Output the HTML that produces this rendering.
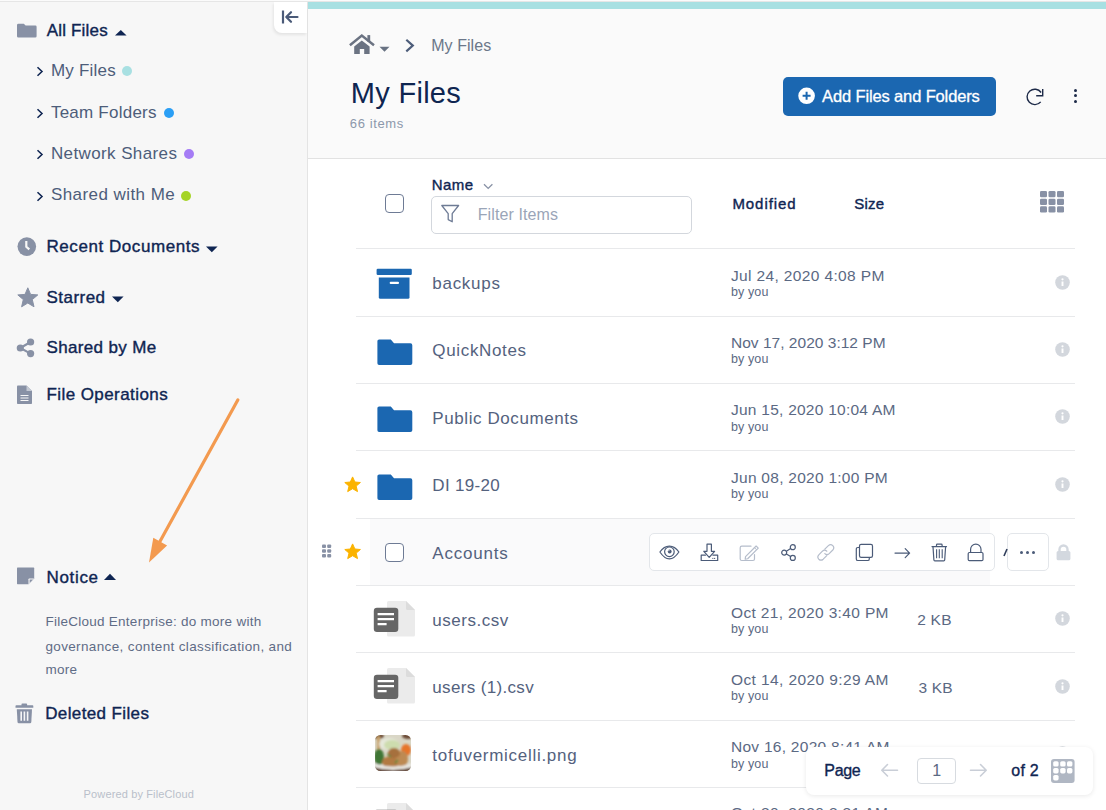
<!DOCTYPE html>
<html><head><meta charset="utf-8"><style>
html,body{margin:0;padding:0;width:1106px;height:810px;overflow:hidden;background:#fff;font-family:"Liberation Sans",sans-serif}
.a{position:absolute;display:block}
.t{position:absolute;white-space:nowrap}
</style></head><body>
<div class="a" style="left:0px;top:0px;width:307px;height:810px;background:#f7f7f7"></div>
<div class="a" style="left:307px;top:0px;width:1px;height:810px;background:#e4e4e4"></div>
<div class="a" style="left:0px;top:0px;width:1106px;height:1px;background:#fbfbfb"></div>
<div class="a" style="left:0px;top:1px;width:1106px;height:1px;background:#e6e6e6"></div>
<div class="a" style="left:274px;top:2px;width:33px;height:31px;background:#fff;border-bottom-left-radius:8px;box-shadow:-1px 2px 3px rgba(0,0,0,0.08)"></div>
<svg class="a" style="left:280.4px;top:9px;" width="20" height="16" viewBox="0 0 20 16"><path d="M3 1.5v13" stroke="#4a5a78" stroke-width="2.2" fill="none"/><path d="M17.5 8H6.5M11 3.2 6.3 8l4.7 4.8" stroke="#4a5a78" stroke-width="2.2" fill="none" stroke-linecap="round" stroke-linejoin="round"/></svg>
<svg class="a" style="left:17px;top:23px;" width="20" height="15" viewBox="0 0 20 15"><path d="M0 2.2Q0 0.8 1.4 0.8H6.8L8.6 2.6H18.4Q19.6 2.6 19.6 3.8V13.2Q19.6 14.6 18.2 14.6H1.4Q0 14.6 0 13.2Z" fill="#8891a5"/></svg>
<div class="t" style="left:46.81px;top:21.81px;font-size:17px;line-height:17px;color:#0f2552;letter-spacing:0.165px;-webkit-text-stroke:0.38px #0f2552;">All Files</div>
<svg class="a" style="left:115px;top:30px;" width="12" height="6" viewBox="0 0 12 6"><path d="M0 5.5 5.8 0 11.6 5.5Z" fill="#0f2552"/></svg>
<svg class="a" style="left:36px;top:66.2px;" width="8" height="11" viewBox="0 0 8 11"><path d="M1.5 1.2 6 5.5 1.5 9.8" stroke="#0f2552" stroke-width="1.55" fill="none"/></svg>
<div class="t" style="left:50.90px;top:61.81px;font-size:17px;line-height:17px;color:#4d5d7a;letter-spacing:0.229px;">My Files</div>
<div class="a" style="left:122px;top:66.2px;width:10px;height:10px;background:#a8e0e2;border-radius:50%"></div>
<svg class="a" style="left:36px;top:108px;" width="8" height="11" viewBox="0 0 8 11"><path d="M1.5 1.2 6 5.5 1.5 9.8" stroke="#0f2552" stroke-width="1.55" fill="none"/></svg>
<div class="t" style="left:50.90px;top:103.61px;font-size:17px;line-height:17px;color:#4d5d7a;letter-spacing:0.236px;">Team Folders</div>
<div class="a" style="left:164px;top:108px;width:10px;height:10px;background:#2b9ff5;border-radius:50%"></div>
<svg class="a" style="left:36px;top:149.3px;" width="8" height="11" viewBox="0 0 8 11"><path d="M1.5 1.2 6 5.5 1.5 9.8" stroke="#0f2552" stroke-width="1.55" fill="none"/></svg>
<div class="t" style="left:50.90px;top:144.91px;font-size:17px;line-height:17px;color:#4d5d7a;letter-spacing:0.396px;">Network Shares</div>
<div class="a" style="left:184px;top:149.3px;width:10px;height:10px;background:#a57cf5;border-radius:50%"></div>
<svg class="a" style="left:36px;top:190.8px;" width="8" height="11" viewBox="0 0 8 11"><path d="M1.5 1.2 6 5.5 1.5 9.8" stroke="#0f2552" stroke-width="1.55" fill="none"/></svg>
<div class="t" style="left:50.90px;top:186.41px;font-size:17px;line-height:17px;color:#4d5d7a;letter-spacing:0.438px;">Shared with Me</div>
<div class="a" style="left:181px;top:190.8px;width:10px;height:10px;background:#a5d426;border-radius:50%"></div>
<svg class="a" style="left:17px;top:237px;" width="20" height="20" viewBox="0 0 20 20"><circle cx="9.8" cy="9.6" r="9.3" fill="#8891a5"/><path d="M9.3 4v5.8l3 2.6" stroke="#f7f7f7" stroke-width="2.2" fill="none"/></svg>
<div class="t" style="left:46.51px;top:237.81px;font-size:17px;line-height:17px;color:#0f2552;letter-spacing:0.558px;-webkit-text-stroke:0.38px #0f2552;">Recent Documents</div>
<svg class="a" style="left:206px;top:246px;" width="12" height="7" viewBox="0 0 12 7"><path d="M0 0.5H11.6L5.8 6.3Z" fill="#0f2552"/></svg>
<svg class="a" style="left:17px;top:287px;" width="22" height="21" viewBox="0 0 22 21"><path d="M10.8 0.8 13.6 7.4 20.8 7.9 15.3 12.6 17 19.8 10.8 16 4.6 19.8 6.3 12.6 0.8 7.9 8 7.4Z" fill="#8891a5" stroke="#8891a5" stroke-width="1" stroke-linejoin="round"/></svg>
<div class="t" style="left:46.51px;top:288.51px;font-size:17px;line-height:17px;color:#0f2552;letter-spacing:0.462px;-webkit-text-stroke:0.38px #0f2552;">Starred</div>
<svg class="a" style="left:112px;top:296px;" width="12" height="7" viewBox="0 0 12 7"><path d="M0 0.5H11.6L5.8 6.3Z" fill="#0f2552"/></svg>
<svg class="a" style="left:16px;top:338px;" width="20" height="20" viewBox="0 0 20 20"><circle cx="14.6" cy="4" r="3.6" fill="#8891a5"/><circle cx="4.3" cy="10" r="3.6" fill="#8891a5"/><circle cx="14.6" cy="15.6" r="3.6" fill="#8891a5"/><path d="M14.6 4 4.3 10 14.6 15.6" stroke="#8891a5" stroke-width="2.2" fill="none"/></svg>
<div class="t" style="left:46.51px;top:338.51px;font-size:17px;line-height:17px;color:#0f2552;letter-spacing:0.343px;-webkit-text-stroke:0.38px #0f2552;">Shared by Me</div>
<svg class="a" style="left:17px;top:385px;" width="16" height="20" viewBox="0 0 16 20"><path d="M0 1.2Q0 0.5 .8 .5H9.5L15 6V18.2Q15 19 14.2 19H.8Q0 19 0 18.2Z" fill="#8891a5"/><path d="M9.5 .5V6H15" fill="#c4c9d3"/><path d="M3.5 10.5h8M3.5 13h8M3.5 15.5h8" stroke="#f7f7f7" stroke-width="1"/></svg>
<div class="t" style="left:46.51px;top:385.71px;font-size:17px;line-height:17px;color:#0f2552;letter-spacing:0.419px;-webkit-text-stroke:0.38px #0f2552;">File Operations</div>
<svg class="a" style="left:140px;top:395px;" width="110" height="175" viewBox="0 0 110 175"><path d="M97.8 5 18 150" stroke="#f39a4f" stroke-width="3.2" stroke-linecap="round"/><path d="M9 167.5 13.3 142.8 27.1 150.6Z" fill="#f39a4f"/></svg>
<svg class="a" style="left:17px;top:567px;" width="18" height="18" viewBox="0 0 18 18"><path d="M0 1.2Q0 .6 .6 .6H16.6Q17.2 .6 17.2 1.2V11.5L11.5 17.2H.6Q0 17.2 0 16.6Z" fill="#8891a5"/><path d="M17.2 11.5H12.2Q11.5 11.5 11.5 12.2V17.2Z" fill="#f7f7f7"/><path d="M16 12.6 12.6 16V12.6Z" fill="#8891a5"/></svg>
<div class="t" style="left:46.51px;top:568.61px;font-size:17px;line-height:17px;color:#0f2552;letter-spacing:0.664px;-webkit-text-stroke:0.38px #0f2552;">Notice</div>
<svg class="a" style="left:104px;top:573px;" width="13" height="8" viewBox="0 0 13 8"><path d="M0 7H12L6 0.8Z" fill="#0f2552"/></svg>
<div class="t" style="left:45.40px;top:615.47px;font-size:13.5px;line-height:13.5px;color:#5f6c86;letter-spacing:0.264px;">FileCloud Enterprise: do more with</div>
<div class="t" style="left:45.40px;top:639.77px;font-size:13.5px;line-height:13.5px;color:#5f6c86;letter-spacing:0.364px;">governance, content classification, and</div>
<div class="t" style="left:45.40px;top:663.37px;font-size:13.5px;line-height:13.5px;color:#5f6c86;letter-spacing:0.250px;">more</div>
<svg class="a" style="left:15px;top:703px;" width="19" height="21" viewBox="0 0 19 21"><path d="M6.5 1.2Q6.5 .5 7.3 .5H11.3Q12.1 .5 12.1 1.2V2.2H17.6Q18.3 2.2 18.3 3V4.8H.5V3Q.5 2.2 1.3 2.2H6.5Z" fill="#8891a5"/><path d="M1.8 6.2H17L16.3 19Q16.2 20.2 15 20.2H3.8Q2.6 20.2 2.5 19Z" fill="#8891a5"/><path d="M6.2 8.5V17.8M9.4 8.5V17.8M12.6 8.5V17.8" stroke="#f7f7f7" stroke-width="1.6"/></svg>
<div class="t" style="left:45.21px;top:704.71px;font-size:17px;line-height:17px;color:#0f2552;letter-spacing:0.377px;-webkit-text-stroke:0.38px #0f2552;">Deleted Files</div>
<div class="t" style="left:83.60px;top:788.59px;font-size:11px;line-height:11px;color:#b9bfca;letter-spacing:0.137px;">Powered by FileCloud</div>
<div class="a" style="left:308px;top:2px;width:798px;height:156px;background:#fafafa"></div>
<div class="a" style="left:308px;top:2px;width:798px;height:7px;background:#a8e0e2"></div>
<div class="a" style="left:308px;top:158px;width:798px;height:1px;background:#e2e2e2"></div>
<div class="a" style="left:308px;top:159px;width:798px;height:651px;background:#fff"></div>
<svg class="a" style="left:348px;top:33px;" width="28" height="22" viewBox="0 0 28 22"><path d="M1.9 12.3 13.8 2.6 26 12.3" stroke="#6b7382" stroke-width="2.5" fill="none"/><rect x="19.4" y="2.1" width="2.8" height="6.5" fill="#6b7382"/><path d="M13.8 7.4 6.2 13.4V20.9H11.8V16H16.2V20.9H21.6V13.4Z" fill="#6b7382"/></svg>
<svg class="a" style="left:379px;top:46px;" width="12" height="7" viewBox="0 0 12 7"><path d="M0.5 0.8H10.5L5.5 5.8Z" fill="#687282"/></svg>
<svg class="a" style="left:404px;top:38px;" width="12" height="16" viewBox="0 0 12 16"><path d="M2.3 1.8 8.8 7.6 2.3 13.4" stroke="#4d5d7a" stroke-width="2.2" fill="none"/></svg>
<div class="t" style="left:431.20px;top:38.45px;font-size:16px;line-height:16px;color:#6b7789;letter-spacing:0.064px;">My Files</div>
<div class="t" style="left:350.80px;top:78.55px;font-size:29px;line-height:29px;color:#0e2550;letter-spacing:0.293px;">My Files</div>
<div class="t" style="left:349.80px;top:116.69px;font-size:13px;line-height:13px;color:#8c98ab;letter-spacing:0.607px;">66 items</div>
<div class="a" style="left:783px;top:77px;width:213px;height:39px;background:#1b67b1;border-radius:5px"></div>
<svg class="a" style="left:798px;top:87px;" width="18" height="18" viewBox="0 0 18 18"><circle cx="8.6" cy="8.8" r="8.3" fill="#fff"/><path d="M8.6 4.8V12.8M4.6 8.8H12.6" stroke="#1b67b1" stroke-width="2"/></svg>
<div class="t" style="left:822.05px;top:88.33px;font-size:16.5px;line-height:16.5px;color:#fff;letter-spacing:-0.135px;-webkit-text-stroke:0.3px #fff;">Add Files and Folders</div>
<svg class="a" style="left:1025px;top:87px;" width="20" height="20" viewBox="0 0 20 20"><path d="M16.1 5.5A7.7 7.7 0 1 0 15.7 14.85" stroke="#1d2a48" stroke-width="1.4" fill="none"/><path d="M11.2 8.7H17.7V2" stroke="#1d2a48" stroke-width="1.4" fill="none"/></svg>
<div class="a" style="left:1073.7px;top:88.65px;width:3.1px;height:3.1px;background:#1d2a48;border-radius:50%"></div>
<div class="a" style="left:1073.7px;top:94.35000000000001px;width:3.1px;height:3.1px;background:#1d2a48;border-radius:50%"></div>
<div class="a" style="left:1073.7px;top:100.05px;width:3.1px;height:3.1px;background:#1d2a48;border-radius:50%"></div>
<div class="a" style="left:385px;top:194px;width:19px;height:19px;box-sizing:border-box;border:1.4px solid #6e7b95;border-radius:4px;background:#fff"></div>
<div class="t" style="left:431.71px;top:176.90px;font-size:15px;line-height:15px;color:#0f2552;letter-spacing:0.473px;-webkit-text-stroke:0.38px #0f2552;">Name</div>
<svg class="a" style="left:483px;top:183px;" width="11" height="7" viewBox="0 0 11 7"><path d="M1 1.2 5.2 5.4 9.4 1.2" stroke="#8891a5" stroke-width="1.3" fill="none"/></svg>
<div class="a" style="left:431px;top:196px;width:261px;height:38px;box-sizing:border-box;border:1px solid #d3d7dd;border-radius:5px;background:#fff"></div>
<svg class="a" style="left:440px;top:204px;" width="21" height="20" viewBox="0 0 21 20"><path d="M1.8 1.5H18.6L12.2 9.6V17.8L8.2 15.6V9.6Z" stroke="#6e7b95" stroke-width="1.3" fill="none" stroke-linejoin="round"/></svg>
<div class="t" style="left:477.70px;top:206.85px;font-size:16px;line-height:16px;color:#9aa5b8;letter-spacing:0.109px;">Filter Items</div>
<div class="t" style="left:732.41px;top:196.20px;font-size:15px;line-height:15px;color:#0f2552;letter-spacing:0.931px;-webkit-text-stroke:0.38px #0f2552;">Modified</div>
<div class="t" style="left:854.31px;top:196.20px;font-size:15px;line-height:15px;color:#0f2552;letter-spacing:0.173px;-webkit-text-stroke:0.38px #0f2552;">Size</div>
<svg class="a" style="left:1039.5px;top:191px;" width="24.5" height="22" viewBox="0 0 24.5 22"><rect x="0" y="0" width="7" height="6.3" rx="1.3" fill="#8891a5"/><rect x="0" y="7.8" width="7" height="6.3" rx="1.3" fill="#8891a5"/><rect x="0" y="15.2" width="7" height="6.3" rx="1.3" fill="#8891a5"/><rect x="8.5" y="0" width="7" height="6.3" rx="1.3" fill="#8891a5"/><rect x="8.5" y="7.8" width="7" height="6.3" rx="1.3" fill="#8891a5"/><rect x="8.5" y="15.2" width="7" height="6.3" rx="1.3" fill="#8891a5"/><rect x="17" y="0" width="7" height="6.3" rx="1.3" fill="#8891a5"/><rect x="17" y="7.8" width="7" height="6.3" rx="1.3" fill="#8891a5"/><rect x="17" y="15.2" width="7" height="6.3" rx="1.3" fill="#8891a5"/></svg>
<div class="a" style="left:356px;top:248px;width:719px;height:1px;background:#e8e9eb"></div>
<div class="a" style="left:356px;top:316px;width:719px;height:1px;background:#e8e9eb"></div>
<div class="a" style="left:356px;top:383px;width:719px;height:1px;background:#e8e9eb"></div>
<div class="a" style="left:356px;top:450px;width:719px;height:1px;background:#e8e9eb"></div>
<div class="a" style="left:356px;top:518px;width:719px;height:1px;background:#e8e9eb"></div>
<div class="a" style="left:356px;top:585px;width:719px;height:1px;background:#e8e9eb"></div>
<div class="a" style="left:356px;top:652px;width:719px;height:1px;background:#e8e9eb"></div>
<div class="a" style="left:356px;top:720px;width:719px;height:1px;background:#e8e9eb"></div>
<div class="a" style="left:356px;top:787px;width:719px;height:1px;background:#e8e9eb"></div>
<div class="a" style="left:370px;top:519px;width:620px;height:66px;background:#fafafb"></div>
<svg class="a" style="left:376px;top:268px;" width="37" height="32" viewBox="0 0 37 32"><rect x="0.6" y="0.7" width="35.2" height="6.3" rx="1.2" fill="#1b67b1"/><path d="M2.8 9.4H33.5V29.2Q33.5 30.7 32 30.7H4.3Q2.8 30.7 2.8 29.2Z" fill="#1b67b1"/><rect x="13.7" y="13.8" width="9.3" height="2.2" rx="1" fill="#fff"/></svg>
<div class="t" style="left:432.30px;top:275.11px;font-size:17px;line-height:17px;color:#54627e;letter-spacing:0.717px;">backups</div>
<div class="t" style="left:731.00px;top:267.78px;font-size:15.5px;line-height:15.5px;color:#5b6983;letter-spacing:0.358px;">Jul 24, 2020 4:08 PM</div>
<div class="t" style="left:731.00px;top:286.12px;font-size:12.5px;line-height:12.5px;color:#5b6983;letter-spacing:0.110px;">by you</div>
<svg class="a" style="left:1054.5px;top:274.5px;" width="15" height="15" viewBox="0 0 15 15"><circle cx="7.5" cy="7.5" r="7.3" fill="#d3d7dd"/><circle cx="7.5" cy="4.3" r="1.1" fill="#fff"/><path d="M7.5 6.5V11" stroke="#fff" stroke-width="1.9"/></svg>
<svg class="a" style="left:376.5px;top:338.95px;" width="36" height="27" viewBox="0 0 36 27"><path d="M0.4 2.1Q0.4 0.4 2.1 0.4H13.8L17 4.3H33.4Q35.3 4.3 35.3 6.2V24.3Q35.3 26.1 33.4 26.1H2.1Q0.4 26.1 0.4 24.3Z" fill="#1b67b1"/></svg>
<div class="t" style="left:432.30px;top:342.46px;font-size:17px;line-height:17px;color:#54627e;letter-spacing:0.661px;">QuickNotes</div>
<div class="t" style="left:731.00px;top:335.13px;font-size:15.5px;line-height:15.5px;color:#5b6983;letter-spacing:0.018px;">Nov 17, 2020 3:12 PM</div>
<div class="t" style="left:731.00px;top:353.47px;font-size:12.5px;line-height:12.5px;color:#5b6983;letter-spacing:0.110px;">by you</div>
<svg class="a" style="left:1054.5px;top:341.84999999999997px;" width="15" height="15" viewBox="0 0 15 15"><circle cx="7.5" cy="7.5" r="7.3" fill="#d3d7dd"/><circle cx="7.5" cy="4.3" r="1.1" fill="#fff"/><path d="M7.5 6.5V11" stroke="#fff" stroke-width="1.9"/></svg>
<svg class="a" style="left:376.5px;top:406.3px;" width="36" height="27" viewBox="0 0 36 27"><path d="M0.4 2.1Q0.4 0.4 2.1 0.4H13.8L17 4.3H33.4Q35.3 4.3 35.3 6.2V24.3Q35.3 26.1 33.4 26.1H2.1Q0.4 26.1 0.4 24.3Z" fill="#1b67b1"/></svg>
<div class="t" style="left:432.30px;top:409.81px;font-size:17px;line-height:17px;color:#54627e;letter-spacing:0.587px;">Public Documents</div>
<div class="t" style="left:731.00px;top:402.48px;font-size:15.5px;line-height:15.5px;color:#5b6983;letter-spacing:0.248px;">Jun 15, 2020 10:04 AM</div>
<div class="t" style="left:731.00px;top:420.82px;font-size:12.5px;line-height:12.5px;color:#5b6983;letter-spacing:0.110px;">by you</div>
<svg class="a" style="left:1054.5px;top:409.2px;" width="15" height="15" viewBox="0 0 15 15"><circle cx="7.5" cy="7.5" r="7.3" fill="#d3d7dd"/><circle cx="7.5" cy="4.3" r="1.1" fill="#fff"/><path d="M7.5 6.5V11" stroke="#fff" stroke-width="1.9"/></svg>
<svg class="a" style="left:376.5px;top:473.65000000000003px;" width="36" height="27" viewBox="0 0 36 27"><path d="M0.4 2.1Q0.4 0.4 2.1 0.4H13.8L17 4.3H33.4Q35.3 4.3 35.3 6.2V24.3Q35.3 26.1 33.4 26.1H2.1Q0.4 26.1 0.4 24.3Z" fill="#1b67b1"/></svg>
<svg class="a" style="left:343.5px;top:476.05px;" width="18" height="17" viewBox="0 0 18 17"><path d="M8.6 .9 10.9 6 16.4 6.5 12.2 10.1 13.5 15.6 8.6 12.7 3.7 15.6 5 10.1 .8 6.5 6.3 6Z" fill="#fbb300" stroke="#fbb300" stroke-width="1" stroke-linejoin="round"/></svg>
<div class="t" style="left:432.30px;top:477.16px;font-size:17px;line-height:17px;color:#54627e;letter-spacing:0.329px;">DI 19-20</div>
<div class="t" style="left:731.00px;top:469.83px;font-size:15.5px;line-height:15.5px;color:#5b6983;letter-spacing:0.266px;">Jun 08, 2020 1:00 PM</div>
<div class="t" style="left:731.00px;top:488.17px;font-size:12.5px;line-height:12.5px;color:#5b6983;letter-spacing:0.110px;">by you</div>
<svg class="a" style="left:1054.5px;top:476.55px;" width="15" height="15" viewBox="0 0 15 15"><circle cx="7.5" cy="7.5" r="7.3" fill="#d3d7dd"/><circle cx="7.5" cy="4.3" r="1.1" fill="#fff"/><path d="M7.5 6.5V11" stroke="#fff" stroke-width="1.9"/></svg>
<svg class="a" style="left:321px;top:544.4000000000001px;" width="12" height="14" viewBox="0 0 12 14"><rect x="1" y="0.5" width="4" height="3.6" rx="1" fill="#8891a5"/><rect x="1" y="5.2" width="4" height="3.6" rx="1" fill="#8891a5"/><rect x="1" y="9.9" width="4" height="3.6" rx="1" fill="#8891a5"/><rect x="6.2" y="0.5" width="4" height="3.6" rx="1" fill="#8891a5"/><rect x="6.2" y="5.2" width="4" height="3.6" rx="1" fill="#8891a5"/><rect x="6.2" y="9.9" width="4" height="3.6" rx="1" fill="#8891a5"/></svg>
<div class="a" style="left:385px;top:543px;width:19px;height:19px;box-sizing:border-box;border:1.4px solid #6e7b95;border-radius:4px;background:#fff"></div>
<svg class="a" style="left:343.5px;top:543.4000000000001px;" width="18" height="17" viewBox="0 0 18 17"><path d="M8.6 .9 10.9 6 16.4 6.5 12.2 10.1 13.5 15.6 8.6 12.7 3.7 15.6 5 10.1 .8 6.5 6.3 6Z" fill="#fbb300" stroke="#fbb300" stroke-width="1" stroke-linejoin="round"/></svg>
<div class="t" style="left:432.30px;top:544.51px;font-size:17px;line-height:17px;color:#54627e;letter-spacing:0.779px;">Accounts</div>
<svg class="a" style="left:373px;top:600.95px;" width="43" height="37" viewBox="0 0 43 37"><path d="M14 1.5Q14 0 15.5 0H33L42 9V34Q42 35.5 40.5 35.5H15.5Q14 35.5 14 34Z" fill="#ebebeb"/><path d="M33 0V7.5Q33 9 34.5 9H42Z" fill="#dcdcdc"/><rect x="0.8" y="6.8" width="24.5" height="24.2" rx="3.2" fill="#666"/><path d="M4.6 13.2H21M4.6 18.2H21M4.6 23.2H13.6" stroke="#fff" stroke-width="2.3"/></svg>
<div class="t" style="left:432.30px;top:611.86px;font-size:17px;line-height:17px;color:#54627e;letter-spacing:0.525px;">users.csv</div>
<div class="t" style="left:731.00px;top:604.53px;font-size:15.5px;line-height:15.5px;color:#5b6983;letter-spacing:0.353px;">Oct 21, 2020 3:40 PM</div>
<div class="t" style="left:731.00px;top:622.87px;font-size:12.5px;line-height:12.5px;color:#5b6983;letter-spacing:0.110px;">by you</div>
<div class="t" style="left:917.30px;top:612.43px;font-size:15.5px;line-height:15.5px;color:#5b6983;letter-spacing:0.200px;">2 KB</div>
<svg class="a" style="left:1054.5px;top:611.25px;" width="15" height="15" viewBox="0 0 15 15"><circle cx="7.5" cy="7.5" r="7.3" fill="#d3d7dd"/><circle cx="7.5" cy="4.3" r="1.1" fill="#fff"/><path d="M7.5 6.5V11" stroke="#fff" stroke-width="1.9"/></svg>
<svg class="a" style="left:373px;top:668.3000000000001px;" width="43" height="37" viewBox="0 0 43 37"><path d="M14 1.5Q14 0 15.5 0H33L42 9V34Q42 35.5 40.5 35.5H15.5Q14 35.5 14 34Z" fill="#ebebeb"/><path d="M33 0V7.5Q33 9 34.5 9H42Z" fill="#dcdcdc"/><rect x="0.8" y="6.8" width="24.5" height="24.2" rx="3.2" fill="#666"/><path d="M4.6 13.2H21M4.6 18.2H21M4.6 23.2H13.6" stroke="#fff" stroke-width="2.3"/></svg>
<div class="t" style="left:432.30px;top:679.21px;font-size:17px;line-height:17px;color:#54627e;letter-spacing:0.342px;">users (1).csv</div>
<div class="t" style="left:731.00px;top:671.88px;font-size:15.5px;line-height:15.5px;color:#5b6983;letter-spacing:0.397px;">Oct 14, 2020 9:29 AM</div>
<div class="t" style="left:731.00px;top:690.22px;font-size:12.5px;line-height:12.5px;color:#5b6983;letter-spacing:0.110px;">by you</div>
<div class="t" style="left:918.40px;top:679.78px;font-size:15.5px;line-height:15.5px;color:#5b6983;letter-spacing:0.200px;">3 KB</div>
<svg class="a" style="left:1054.5px;top:678.6px;" width="15" height="15" viewBox="0 0 15 15"><circle cx="7.5" cy="7.5" r="7.3" fill="#d3d7dd"/><circle cx="7.5" cy="4.3" r="1.1" fill="#fff"/><path d="M7.5 6.5V11" stroke="#fff" stroke-width="1.9"/></svg>
<svg class="a" style="left:375px;top:735.15px;" width="36" height="36" viewBox="0 0 36 36"><defs><clipPath id="ic"><rect x="0" y="0" width="36" height="36" rx="5.5"/></clipPath><filter id="bl" x="-10%" y="-10%" width="120%" height="120%"><feGaussianBlur stdDeviation="0.9"/></filter></defs><g clip-path="url(#ic)"><rect width="36" height="36" fill="#d9d6c6"/><g filter="url(#bl)"><ellipse cx="3" cy="1" rx="6" ry="3" fill="#6b4a36"/><ellipse cx="33" cy="1" rx="6" ry="3" fill="#6b4a36"/><rect x="2" y="1" width="3" height="14" fill="#c9a26a"/><ellipse cx="14" cy="9" rx="10" ry="6" fill="#e6e8da"/><ellipse cx="17" cy="10" rx="8" ry="5" fill="#cddcae"/><ellipse cx="4" cy="22" rx="5" ry="8" fill="#3f7634"/><ellipse cx="31" cy="15" rx="5" ry="6" fill="#e6742c"/><ellipse cx="16" cy="27" rx="9" ry="6" fill="#b27a42"/><ellipse cx="27" cy="24" rx="6" ry="8" fill="#bd8a52"/><ellipse cx="19" cy="18" rx="6" ry="5" fill="#a66f3c"/><path d="M12 19 16 22M20 28 23 25" stroke="#4b8a3a" stroke-width="1.5"/><path d="M-2 28Q18 35 38 28V38H-2Z" fill="#e9e7e2"/><path d="M-2 32Q18 38 38 32V40H-2Z" fill="#5e4030"/></g></g></svg>
<div class="t" style="left:432.30px;top:746.56px;font-size:17px;line-height:17px;color:#54627e;letter-spacing:0.706px;">tofuvermicelli.png</div>
<div class="t" style="left:731.00px;top:739.23px;font-size:15.5px;line-height:15.5px;color:#5b6983;letter-spacing:0.268px;">Nov 16, 2020 8:41 AM</div>
<div class="t" style="left:731.00px;top:757.57px;font-size:12.5px;line-height:12.5px;color:#5b6983;letter-spacing:0.110px;">by you</div>
<svg class="a" style="left:1054.5px;top:745.95px;" width="15" height="15" viewBox="0 0 15 15"><circle cx="7.5" cy="7.5" r="7.3" fill="#d3d7dd"/><circle cx="7.5" cy="4.3" r="1.1" fill="#fff"/><path d="M7.5 6.5V11" stroke="#fff" stroke-width="1.9"/></svg>
<svg class="a" style="left:373px;top:803.0px;" width="43" height="37" viewBox="0 0 43 37"><path d="M14 1.5Q14 0 15.5 0H33L42 9V34Q42 35.5 40.5 35.5H15.5Q14 35.5 14 34Z" fill="#ebebeb"/><path d="M33 0V7.5Q33 9 34.5 9H42Z" fill="#dcdcdc"/><rect x="0.8" y="6.8" width="24.5" height="24.2" rx="3.2" fill="#666"/><path d="M4.6 13.2H21M4.6 18.2H21M4.6 23.2H13.6" stroke="#fff" stroke-width="2.3"/></svg>
<div class="t" style="left:731.00px;top:805.38px;font-size:15.5px;line-height:15.5px;color:#5b6983;letter-spacing:0.371px;">Oct 30, 2020 3:31 AM</div>
<div class="t" style="left:731.00px;top:824.92px;font-size:12.5px;line-height:12.5px;color:#5b6983;letter-spacing:0.110px;">by you</div>
<svg class="a" style="left:1054.5px;top:813.3px;" width="15" height="15" viewBox="0 0 15 15"><circle cx="7.5" cy="7.5" r="7.3" fill="#d3d7dd"/><circle cx="7.5" cy="4.3" r="1.1" fill="#fff"/><path d="M7.5 6.5V11" stroke="#fff" stroke-width="1.9"/></svg>
<div class="a" style="left:648.5px;top:533px;width:346px;height:38px;box-sizing:border-box;border:1px solid #e3e6ea;border-radius:5px;background:#fff"></div>
<div class="a" style="left:1007px;top:533px;width:42px;height:38px;box-sizing:border-box;border:1px solid #e3e6ea;border-radius:5px;background:#fff"></div>
<svg class="a" style="left:658px;top:543px;" width="22" height="18" viewBox="0 0 22 18"><path d="M1.9 9C4.6 5 7.6 3.1 11.4 3.1S18.2 5 20.9 9C18.2 13 15.2 15.9 11.4 15.9S4.6 13 1.9 9Z" stroke="#4b5b78" stroke-width="1.2" fill="none" stroke-linecap="round" stroke-linejoin="round"/><circle cx="11.4" cy="8.8" r="4.8" stroke="#4b5b78" stroke-width="1.2" fill="none" stroke-linecap="round" stroke-linejoin="round"/><circle cx="11.7" cy="8.5" r="1.9" fill="#4b5b78"/><circle cx="10.9" cy="7.6" r="0.6" fill="#fff"/></svg>
<svg class="a" style="left:700px;top:543px;" width="19" height="19" viewBox="0 0 19 19"><path d="M7 1.2H11.4V8.3H14.6L9.2 14.4 3.8 8.3H7Z" stroke="#4b5b78" stroke-width="1.2" fill="none" stroke-linecap="round" stroke-linejoin="round"/><path d="M5.4 12.2H1.2V17.5H17.7V12.2H13" stroke="#4b5b78" stroke-width="1.2" fill="none" stroke-linecap="round" stroke-linejoin="round"/><path d="M12.3 15.4H15.8" stroke="#4b5b78" stroke-width="1" stroke-dasharray="1.1 0.6"/></svg>
<svg class="a" style="left:738.5px;top:543px;" width="22" height="19" viewBox="0 0 22 19"><path d="M12 3.2H2.8Q1.2 3.2 1.2 4.8V16Q1.2 17.5 2.8 17.5H14Q15.5 17.5 15.5 16V11.5" stroke="#b5bdcb" stroke-width="1.2" fill="none" stroke-linecap="round" stroke-linejoin="round"/><path d="M6.54 13.64 17.14 3.04 19.26 5.16 8.66 15.76 6.2 16.1Z" stroke="#b5bdcb" stroke-width="1.2" fill="none" stroke-linecap="round" stroke-linejoin="round"/><path d="M15.5 4.7 17.6 6.8" stroke="#b5bdcb" stroke-width="1"/></svg>
<svg class="a" style="left:779.5px;top:543px;" width="18" height="19" viewBox="0 0 18 19"><circle cx="12.8" cy="4.2" r="2.5" stroke="#4b5b78" stroke-width="1.2" fill="none" stroke-linecap="round" stroke-linejoin="round"/><circle cx="4.2" cy="9.6" r="2.5" stroke="#4b5b78" stroke-width="1.2" fill="none" stroke-linecap="round" stroke-linejoin="round"/><circle cx="12.8" cy="14.9" r="2.5" stroke="#4b5b78" stroke-width="1.2" fill="none" stroke-linecap="round" stroke-linejoin="round"/><path d="M10.6 5.6 6.4 8.2M6.4 11 10.6 13.5" stroke="#4b5b78" stroke-width="1.2" fill="none" stroke-linecap="round" stroke-linejoin="round"/></svg>
<svg class="a" style="left:816px;top:543px;" width="20" height="19" viewBox="0 0 20 19"><path d="M8.8 6.2 12.4 2.6Q14.6 .6 16.8 2.6Q18.8 4.8 16.8 7L13.2 10.6Q11 12.6 8.8 10.6" stroke="#b5bdcb" stroke-width="1.2" fill="none" stroke-linecap="round" stroke-linejoin="round"/><path d="M10.8 12.6 7.2 16.2Q5 18.2 2.8 16.2Q.8 14 2.8 11.8L6.4 8.2Q8.6 6.2 10.8 8.2" stroke="#b5bdcb" stroke-width="1.2" fill="none" stroke-linecap="round" stroke-linejoin="round"/></svg>
<svg class="a" style="left:855px;top:543px;" width="19" height="19" viewBox="0 0 19 19"><path d="M4.5 4.5H2.9Q1.3 4.5 1.3 6.1V15.9Q1.3 17.5 2.9 17.5H12.7Q14.3 17.5 14.3 15.9V14.3" stroke="#4b5b78" stroke-width="1.2" fill="none" stroke-linecap="round" stroke-linejoin="round"/><rect x="4.5" y="1.3" width="13" height="13" rx="1.6" stroke="#4b5b78" stroke-width="1.2" fill="#fff"/></svg>
<svg class="a" style="left:894px;top:547px;" width="17" height="12" viewBox="0 0 17 12"><path d="M1 6.1H15.6M11.2 1.6 15.6 6.1 11.2 10.6" stroke="#4b5b78" stroke-width="1.2" fill="none" stroke-linecap="round" stroke-linejoin="round"/></svg>
<svg class="a" style="left:931px;top:543px;" width="17" height="19" viewBox="0 0 17 19"><path d="M1 3.6H15.5" stroke="#4b5b78" stroke-width="1.2" fill="none" stroke-linecap="round" stroke-linejoin="round"/><path d="M5.5 3.4V2Q5.5 1.2 6.3 1.2H10.3Q11.1 1.2 11.1 2V3.4" stroke="#4b5b78" stroke-width="1.2" fill="none" stroke-linecap="round" stroke-linejoin="round"/><path d="M2 3.8 2.9 17Q3 17.8 3.8 17.8H12.8Q13.6 17.8 13.7 17L14.6 3.8" stroke="#4b5b78" stroke-width="1.2" fill="none" stroke-linecap="round" stroke-linejoin="round"/><path d="M5.6 6.2V15.2M8.3 6.2V15.2M11.2 6.2V15.2" stroke="#4b5b78" stroke-width="1.1"/></svg>
<svg class="a" style="left:967px;top:543px;" width="17" height="19" viewBox="0 0 17 19"><path d="M3.6 9.5V6.3A5.2 5.2 0 0 1 14 6.3V9.5" stroke="#4b5b78" stroke-width="1.2" fill="none" stroke-linecap="round" stroke-linejoin="round"/><rect x="1.2" y="9.5" width="14.8" height="8.1" rx="1.2" stroke="#4b5b78" stroke-width="1.2" fill="none" stroke-linecap="round" stroke-linejoin="round"/></svg>
<svg class="a" style="left:1003px;top:547px;" width="5" height="10" viewBox="0 0 5 10"><path d="M1 9 4 2" stroke="#2f3d5a" stroke-width="1.6"/></svg>
<div class="a" style="left:1020.1999999999999px;top:551px;width:3.2px;height:3.2px;background:#4b5b78;border-radius:50%"></div>
<div class="a" style="left:1025.9px;top:551px;width:3.2px;height:3.2px;background:#4b5b78;border-radius:50%"></div>
<div class="a" style="left:1031.6000000000001px;top:551px;width:3.2px;height:3.2px;background:#4b5b78;border-radius:50%"></div>
<svg class="a" style="left:1055.5px;top:544px;" width="15" height="17" viewBox="0 0 15 17"><path d="M3.5 7.5V5.5A4 4 0 0 1 11.5 5.5V7.5" stroke="#d3d8df" stroke-width="2.4" fill="none"/><rect x="0.6" y="7" width="13.8" height="9.2" rx="1.5" fill="#d3d8df"/></svg>
<div class="a" style="left:806px;top:747px;width:287px;height:48px;background:#fff;border-radius:8px;box-shadow:0 1px 5px rgba(0,0,0,0.09)"></div>
<div class="t" style="left:824.33px;top:762.75px;font-size:16px;line-height:16px;color:#0f2552;letter-spacing:-0.367px;-webkit-text-stroke:0.35px #0f2552;">Page</div>
<svg class="a" style="left:880px;top:763px;" width="19" height="15" viewBox="0 0 19 15"><path d="M17.5 7.3H2M7.5 1.5 1.8 7.3 7.5 13" stroke="#c9ced7" stroke-width="1.6" fill="none" stroke-linecap="round" stroke-linejoin="round"/></svg>
<div class="a" style="left:917px;top:758px;width:39px;height:26px;box-sizing:border-box;border:1px solid #d7dbe0;border-radius:4px;background:#fff"></div>
<div class="t" style="left:932.30px;top:762.75px;font-size:16px;line-height:16px;color:#5b6983;">1</div>
<svg class="a" style="left:969px;top:763px;" width="19" height="15" viewBox="0 0 19 15"><path d="M1.5 7.3H17M11.5 1.5 17.2 7.3 11.5 13" stroke="#c9ced7" stroke-width="1.6" fill="none" stroke-linecap="round" stroke-linejoin="round"/></svg>
<div class="t" style="left:1011.33px;top:762.75px;font-size:16px;line-height:16px;color:#0f2552;letter-spacing:0.183px;-webkit-text-stroke:0.35px #0f2552;">of 2</div>
<svg class="a" style="left:1051.2px;top:759px;" width="24" height="24" viewBox="0 0 24 24"><rect x="0" y="0" width="23.6" height="24" rx="3" fill="#b0b7c3"/><rect x="2.2" y="2.2" width="5.4" height="5.4" rx="1.6" fill="#fff"/><rect x="9.2" y="2.2" width="5.4" height="5.4" rx="1.6" fill="#fff"/><rect x="16" y="2.2" width="5.4" height="5.4" rx="1.6" fill="#fff"/><rect x="2.2" y="9" width="5.4" height="5.4" rx="1.6" fill="#fff"/><rect x="9.2" y="9" width="5.4" height="5.4" rx="1.6" fill="#fff"/><rect x="16" y="9" width="5.4" height="5.4" rx="1.6" fill="#fff"/><rect x="2.2" y="16" width="5.4" height="5.4" rx="1.6" fill="#fff"/></svg>
</body></html>
